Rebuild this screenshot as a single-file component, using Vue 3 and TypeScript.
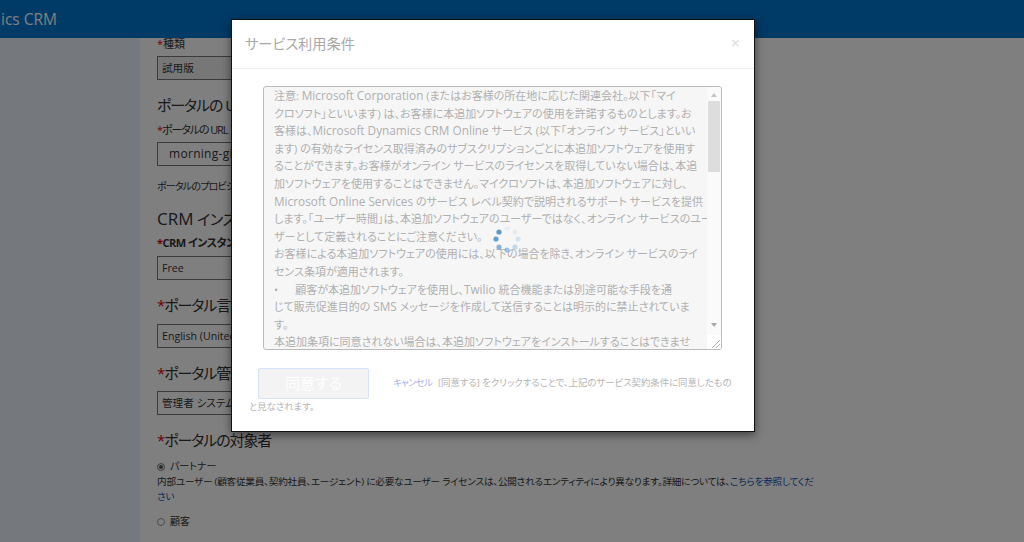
<script setup lang="ts">
const terms: string[] = [
  '注意: Microsoft Corporation (またはお客様の所在地に応じた関連会社。以下「マイ',
  'クロソフト」といいます) は、お客様に本追加ソフトウェアの使用を許諾するものとします。お',
  '客様は、Microsoft Dynamics CRM Online サービス (以下「オンライン サービス」といい',
  'ます) の有効なライセンス取得済みのサブスクリプションごとに本追加ソフトウェアを使用す',
  'ることができます。お客様がオンライン サービスのライセンスを取得していない場合は、本追',
  '加ソフトウェアを使用することはできません。マイクロソフトは、本追加ソフトウェアに対し、',
  'Microsoft Online Services のサービス レベル契約で説明されるサポート サービスを提供',
  'します。「ユーザー時間」は、本追加ソフトウェアのユーザーではなく、オンライン サービスのユー',
  'ザーとして定義されることにご注意ください。',
  'お客様による本追加ソフトウェアの使用には、以下の場合を除き、オンライン サービスのライ',
  'センス条項が適用されます。',
  '•\u00a0\u00a0\u00a0\u00a0\u00a0\u00a0顧客が本追加ソフトウェアを使用し、Twilio 統合機能または別途可能な手段を通',
  'じて販売促進目的の SMS メッセージを作成して送信することは明示的に禁止されていま',
  'す。',
  '本追加条項に同意されない場合は、本追加ソフトウェアをインストールすることはできませ'
]

// latin words run larger than the japanese around them
const lines = terms.map((line) => line.split(/([A-Za-z][A-Za-z ]*[A-Za-z])/))

// spinner dots, fading round the ring
const dots = [
  { x: 12, y: 5, o: 0.9 },
  { x: 9, y: 12, o: 0.85 },
  { x: 12, y: 20, o: 0.65 },
  { x: 20, y: 23, o: 0.5 },
  { x: 28, y: 20, o: 0.3 },
  { x: 31, y: 12, o: 0.18 },
  { x: 28, y: 5, o: 0.1 },
  { x: 20, y: 1, o: 0.07 }
]
</script>

<template>
  <div class="page">
    <header class="topbar">
      <div class="brand"><span>Microsoft Dynamics CRM</span></div>
    </header>

    <main class="form">
      <label class="label first"><i>*</i>種類</label>
      <div class="field disabled">試用版</div>

      <h2 class="url-title">ポータルの URL</h2>
      <label class="label"><i>*</i>ポータルの URL</label>
      <div class="field url">morning-giraffe</div>
      <p class="hint">ポータルのプロビジョニング</p>

      <h2 class="crm"><span class="latin">CRM</span> インスタンス</h2>
      <label class="label bold"><i>*</i>CRM インスタンス</label>
      <div class="field">Free</div>

      <h2 class="req"><i>*</i>ポータル言語</h2>
      <div class="field">English (United States)</div>

      <h2 class="req"><i>*</i>ポータル管理者</h2>
      <div class="field">管理者 システム</div>

      <h2 class="req aud"><i>*</i>ポータルの対象者</h2>
      <div class="radio"><span class="dot on"></span>パートナー</div>
      <p class="desc">内部ユーザー (顧客従業員、契約社員、エージェント) に必要なユーザー ライセンスは、公開されるエンティティにより異なります。詳細については、<a>こちらを参照してください</a></p>
      <div class="radio second"><span class="dot"></span>顧客</div>
    </main>

    <div class="overlay">
      <section class="modal">
        <div class="modal-head">
          <h3>サービス利用条件</h3>
          <span class="close">×</span>
        </div>
        <div class="modal-body">
          <div class="textarea">
            <div class="lines">
              <div v-for="(parts, i) in lines" :key="i" class="line">
                <span v-for="(part, j) in parts" :key="j" :class="{ word: j % 2 === 1 }">{{ part }}</span>
              </div>
            </div>
            <div class="scrollbar">
              <span class="arrow up"></span>
              <span class="thumb"></span>
              <span class="arrow down"></span>
            </div>
            <svg class="grip" width="14" height="14" viewBox="0 0 14 14">
              <path d="M13 5 5 13M13 9 9 13" stroke="#b5b5b5" fill="none" />
            </svg>
          </div>
        </div>
        <p class="actions">
          <button class="agree" type="button">同意する</button>
          <a class="cancel">キャンセル</a>
          <span class="terms">[同意する] をクリックすることで、上記のサービス契約条件に同意したもの</span><br />と見なされます。
        </p>
        <svg class="spinner" width="40" height="28" viewBox="0 0 40 28">
          <circle v-for="(d, i) in dots" :key="i" :cx="d.x" :cy="d.y" r="2.6" fill="#4a90c8" :opacity="d.o" />
        </svg>
      </section>
    </div>
  </div>
</template>

<style scoped>
.page {
  position: relative;
  height: 542px;
  overflow: hidden;
  background: #eaf3fb;
  font-family: "Open Sans", "Noto Sans CJK JP", sans-serif;
  font-feature-settings: "palt";
  color: #333;
}
.topbar {
  height: 38px;
  background: #0074cc;
  display: flex;
  align-items: center;
}
.brand {
  width: 57px;
  display: flex;
  justify-content: flex-end;
  white-space: nowrap;
  color: #fff;
  font-size: 15.5px;
}
.form {
  margin-left: 140px;
  padding: 0 0 0 17px;
  height: 504px;
  background: #fff;
  width: 884px;
  box-sizing: border-box;
  overflow: hidden;
}
i {
  color: #e00000;
  font-style: normal;
}
.label {
  display: block;
  font-size: 11px;
  letter-spacing: -1.1px;
  line-height: 16px;
  margin: -1px 0 4px;
}
.label.first {
  margin: -2px 0 4px;
  letter-spacing: 0;
}
.label.bold {
  font-weight: 700;
  letter-spacing: -0.5px;
  margin: 0 0 5px;
}
.field {
  width: 400px;
  height: 24px;
  box-sizing: border-box;
  border: 1px solid #777;
  padding: 0 4px;
  font-size: 10.6px;
  line-height: 22px;
}
.disabled {
  background: #eee;
}
.url {
  padding-left: 11px;
  font-size: 12px;
  letter-spacing: 0.3px;
}
h2 {
  margin: 13px 0 7px;
  font-size: 15px;
  letter-spacing: -1.1px;
  line-height: 24px;
  font-weight: 400;
}
h2.url-title {
  margin-bottom: 6px;
}
.latin {
  font-size: 17px;
  letter-spacing: 0;
}
h2.crm {
  margin: 13px 0 4px;
  letter-spacing: -0.4px;
}
h2.req {
  margin: 13px 0 6.5px;
}
h2.aud {
  margin: 13px 0 7px;
}
.hint {
  margin: 12px 0 0;
  font-size: 10px;
  letter-spacing: -0.8px;
  line-height: 16px;
}
.radio {
  display: flex;
  align-items: center;
  gap: 5px;
  font-size: 10px;
  line-height: 15px;
}
.second {
  margin-top: 10px;
}
.dot {
  width: 6px;
  height: 6px;
  border: 1px solid #999;
  border-radius: 50%;
  background: #fff;
}
.dot.on {
  background: #555;
  box-shadow: inset 0 0 0 1px #fff;
}
.desc {
  margin: 0;
  width: 658px;
  font-size: 9.6px;
  letter-spacing: -0.2px;
  line-height: 15px;
}
.desc a {
  color: #1a4fb0;
}
.overlay {
  position: absolute;
  inset: 0;
  background: rgba(0, 0, 0, 0.5);
}
.modal {
  position: relative;
  margin: 19px 0 0 231px;
  width: 524px;
  height: 413px;
  box-sizing: border-box;
  border: 1px solid #111;
  background: #fff;
  box-shadow: 0 3px 9px rgba(0, 0, 0, 0.5);
}
.modal-head {
  height: 49px;
  box-sizing: border-box;
  border-bottom: 1px solid #eee;
  display: flex;
  align-items: center;
  justify-content: space-between;
  padding: 0 14px 3px 13px;
}
h3 {
  margin: 0;
  font-size: 14.2px;
  font-weight: 400;
  color: #a8a8a8;
}
.close {
  color: #ddd;
  font-size: 16px;
}
.modal-body {
  padding: 17px 0 0 31px;
}
.textarea {
  position: relative;
  width: 459px;
  height: 264px;
  box-sizing: border-box;
  border: 1px solid #bbb;
  border-radius: 3px;
  background: #f6f6f6;
  overflow: hidden;
}
.lines {
  padding-left: 10px;
  color: #b0b0b0;
  font-size: 11px;
  line-height: 17.6px;
}
.line {
  white-space: nowrap;
}
.word {
  font-size: 11.8px;
}
.scrollbar {
  position: absolute;
  top: 0;
  right: 0;
  width: 14px;
  height: 100%;
  background: #fafafa;
  display: flex;
  flex-direction: column;
  align-items: center;
}
.thumb {
  width: 12px;
  height: 71px;
  background: #ddd;
}
.arrow {
  width: 0;
  height: 0;
  border-left: 3px solid transparent;
  border-right: 3px solid transparent;
}
.arrow.up {
  border-bottom: 4px solid #c4c4c4;
  margin: 6px 0 4px;
}
.arrow.down {
  border-top: 4px solid #a8a8a8;
  margin-top: 151px;
}
.grip {
  position: absolute;
  right: 0;
  bottom: 0;
  background: #fff;
}
.actions {
  margin: 18px 0 0 17px;
  width: 500px;
  font-size: 9.4px;
  line-height: 15px;
  color: #b5b5b5;
}
.agree {
  margin: 0 24px 0 9px;
  width: 111px;
  height: 31px;
  border: 1px solid #d4e5fb;
  border-radius: 2px;
  background: #f3f3f3;
  color: #fff;
  font: inherit;
  font-size: 15px;
}
.cancel {
  color: #a9b4e6;
  letter-spacing: -0.7px;
  margin-right: 6px;
  vertical-align: 3px;
}
.terms {
  vertical-align: 3px;
}
.spinner {
  position: absolute;
  left: 255px;
  top: 207px;
}
</style>

<style>
html, body {
  margin: 0;
  overflow: hidden;
}
</style>
